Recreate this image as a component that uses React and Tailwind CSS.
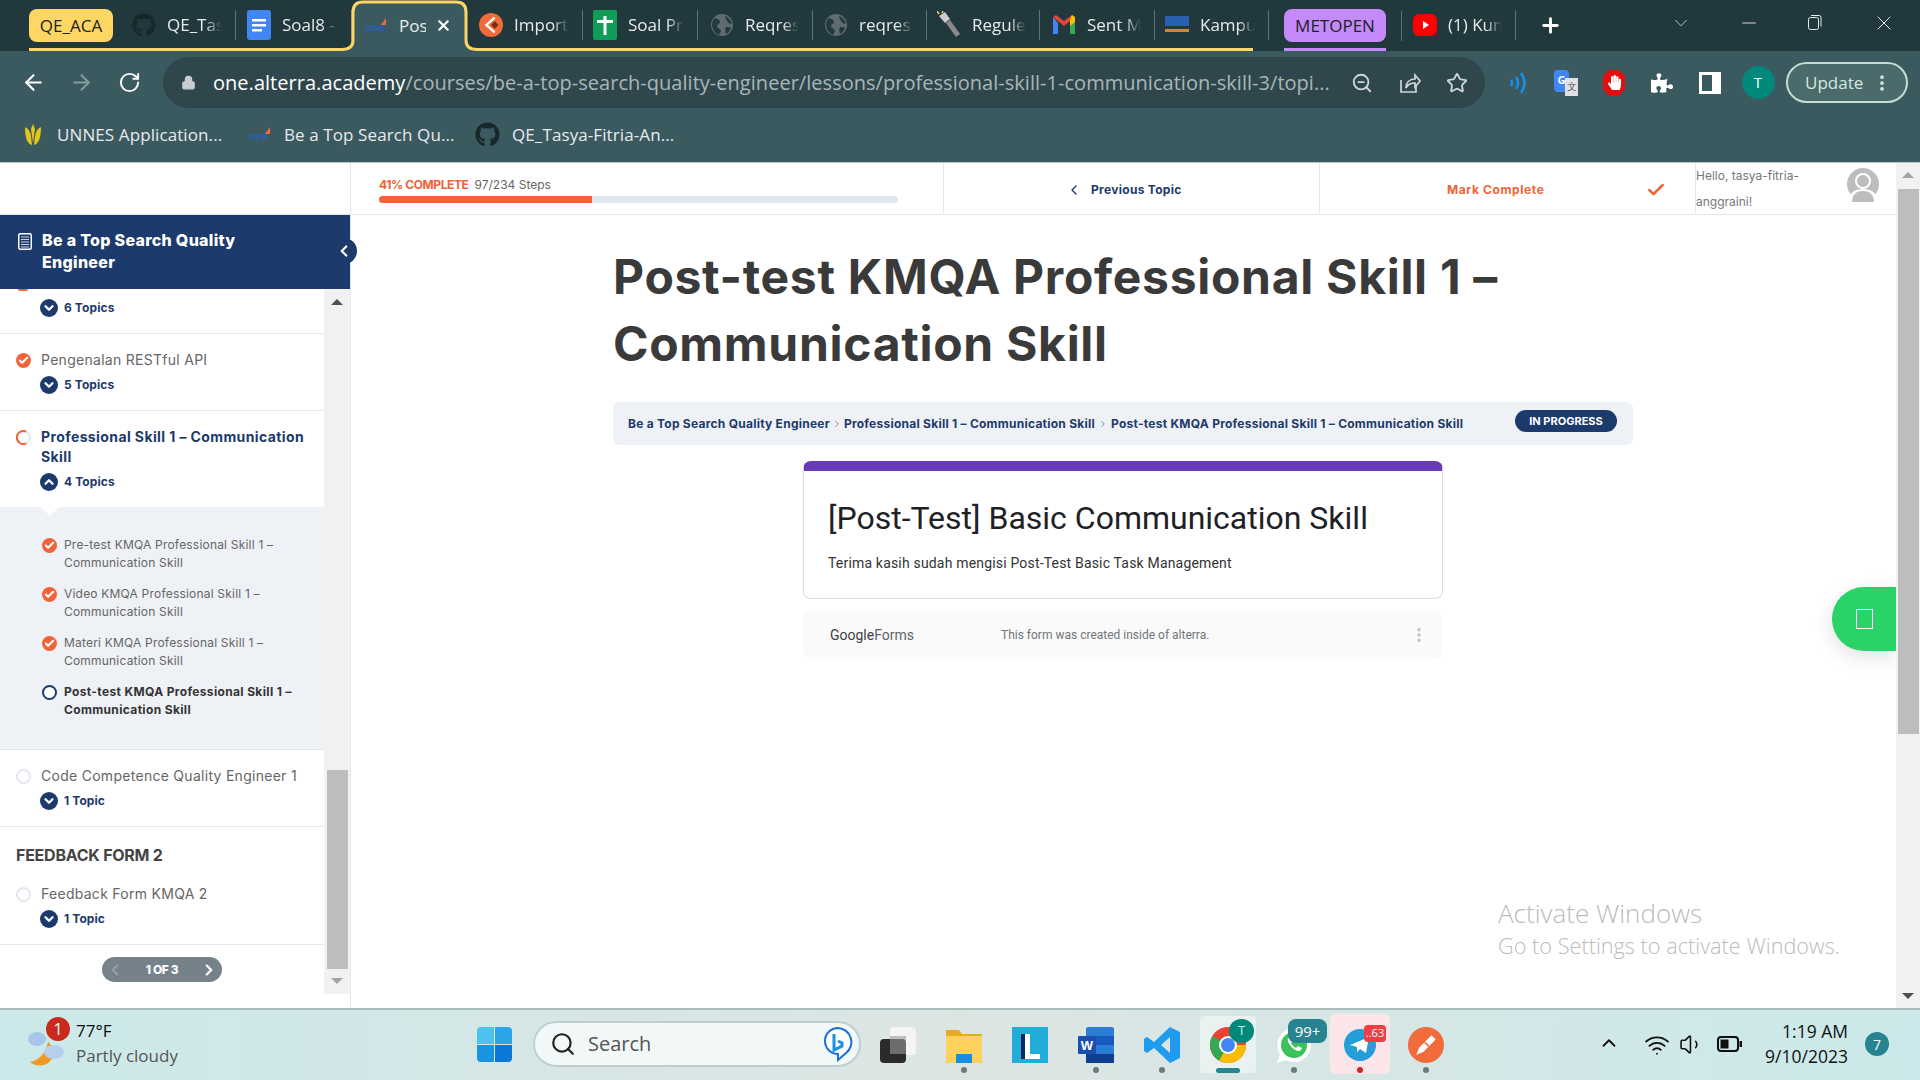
import React from "react";
import { ArrowLeft, ArrowRight, RotateCw, Lock, ZoomOut, Search, Star, Plus, X, Minus, ChevronDown, ChevronUp, ChevronLeft, ChevronRight, Check, Volume1, Wifi, MoreVertical } from "lucide-react";
import { FaGithub, FaPuzzlePiece, FaHandPaper } from "react-icons/fa";

const Globe = () => (
  <svg width="24" height="24" viewBox="0 0 24 24"><circle cx="12" cy="12" r="11" fill="#5f6b6e" /><path d="M5 5c3 1 5 2 5 4s-3 2-3 4 3 2 4 5l-2 4c-4-2-7-6-7-10 0-3 1-5 3-7zM15 3c3 1 6 4 7 8-2 0-4-1-5-3s-2-3-2-5zM16 14c2 0 4 0 5 1-1 3-3 5-5 6-1-2-1-5 0-7z" fill="#223a3e" /></svg>
);
const Docs = () => (
  <svg width="24" height="30" viewBox="0 0 24 30"><rect width="24" height="30" rx="3" fill="#4285f4" /><rect x="5" y="9" width="14" height="2.5" fill="#fff" /><rect x="5" y="14" width="14" height="2.5" fill="#fff" /><rect x="5" y="19" width="10" height="2.5" fill="#fff" /></svg>
);
const Sheets = () => (
  <svg width="24" height="30" viewBox="0 0 24 30"><rect width="24" height="30" rx="2" fill="#0f9d58" /><rect x="4" y="10" width="16" height="3" fill="#fff" /><rect x="10.5" y="6" width="3" height="19" fill="#fff" /></svg>
);
const Katalon = () => (
  <svg width="26" height="26" viewBox="0 0 26 26"><circle cx="13" cy="13" r="13" fill="#f26b3a" /><path d="M17 5l-9 8 9 8" fill="none" stroke="#fff" strokeWidth="2.5" /><path d="M17 9l4 4-4 4-4-4z" fill="#7a2c10" /></svg>
);
const Postman = ({ s = 26 }) => (
  <svg width={s} height={s} viewBox="0 0 26 26"><circle cx="13" cy="13" r="13" fill="#f26b3a" /><path d="M6 20l2-5 9-9 3 3-9 9z" fill="#fff" /><path d="M12 11l3 3" stroke="#f26b3a" strokeWidth="1.2" fill="none" /></svg>
);
const Flashlight = () => (
  <svg width="24" height="28" viewBox="0 0 24 28"><path d="M2 5l6-4 5 7-5 4z" fill="#ccc" /><path d="M9 12l4-3 10 14-4 3z" fill="#8a8a8a" /><path d="M0 0l2 3M6 0l-1 2" stroke="#fdd663" strokeWidth="1.5" /></svg>
);
const Gmail = () => (
  <svg width="24" height="22" viewBox="0 0 24 22"><path d="M1 3v17h5V9z" fill="#4285f4" /><path d="M23 3v17h-5V9z" fill="#34a853" /><path d="M1 3l11 9 11-9-3-2-8 6-8-6z" fill="#ea4335" /><path d="M20 1l3 2v5l-5 4V5z" fill="#fbbc04" /></svg>
);
const Kampus = () => (
  <svg width="24" height="20" viewBox="0 0 24 20"><rect x="0" y="1" width="24" height="10" fill="#2a5fb0" /><rect x="0" y="11" width="24" height="3" fill="#223a3e" /><rect x="0" y="14" width="24" height="3" fill="#d18b2f" /></svg>
);
const Youtube = () => (
  <svg width="24" height="22" viewBox="0 0 24 22"><rect width="24" height="22" rx="6" fill="#f00" /><path d="M10 7l6 4-6 4z" fill="#fff" /></svg>
);
const One = ({ c = "#2a5fb0" }) => (
  <span className="relative inline-flex w-[22px] h-[20px] items-center justify-center text-[11px] font-bold leading-none [font-family:'Inter',sans-serif]" style={{ color: c }}>one<span className="absolute right-0 top-0 w-0 h-0 border-l-[5px] border-l-transparent border-b-[7px] border-b-[#f26b3a]" /></span>
);

function Tab({ w, pl, icon, label }) {
  return (
    <div className="flex items-center h-[50px] shrink-0" style={{ width: w, paddingLeft: pl }}>
      <span className="w-[24px] flex justify-center shrink-0">{icon}</span>
      <span className="ml-[11px] flex-1 mr-[13px] overflow-hidden whitespace-nowrap text-[#e8eaed] text-[17px] [mask-image:linear-gradient(to_right,#000_70%,transparent)]">{label}</span>
      <span className="w-px h-[30px] bg-[#5d7376] shrink-0" />
    </div>
  );
}

function TabStrip() {
  return (
    <div className="relative h-[51px] bg-[#21383c] flex pl-[29px] shrink-0 [font-family:'Open_Sans',sans-serif]">
      <div className="w-[84px] h-[33px] mt-[9px] rounded-lg bg-[#fdd663] text-[#202124] text-[17px] flex items-center justify-center shrink-0">QE_ACA</div>
      <div className="w-[7px] shrink-0" />
      <Tab w={116} pl={12} icon={<FaGithub size={24} color="#17272a" />} label="QE_Tasya" />
      <Tab w={116} pl={11} icon={<Docs />} label="Soal8 -" />
      <div className="relative w-[116px] h-[51px] flex items-center pl-[12px] shrink-0">
        <svg className="absolute -left-[10px] top-0" width="135" height="51" viewBox="0 0 135 51"><path d="M0 49.5Q11 49.5 11 40V12Q11 2 21 2H114Q124 2 124 12V40Q124 49.5 135 49.5V51H0Z" fill="#3a5a60" /><path d="M0 49.5Q11 49.5 11 40V12Q11 2 21 2H114Q124 2 124 12V40Q124 49.5 135 49.5" fill="none" stroke="#fdd663" strokeWidth="3" /></svg>
        <span className="relative w-[24px]"><One /></span>
        <span className="relative ml-[11px] w-[27px] overflow-hidden text-[#e8eaed] text-[17px] whitespace-nowrap">Post</span>
        <X className="relative ml-[9px]" size={17} color="#fff" strokeWidth={3} />
      </div>
      <Tab w={115} pl={11} icon={<Katalon />} label="Importing" />
      <Tab w={115} pl={10} icon={<Sheets />} label="Soal Praktikum" />
      <Tab w={115} pl={12} icon={<Globe />} label="Reqres" />
      <Tab w={114} pl={11} icon={<Globe />} label="reqres.in" />
      <Tab w={113} pl={10} icon={<Flashlight />} label="Regulex" />
      <Tab w={115} pl={12} icon={<Gmail />} label="Sent Mail" />
      <Tab w={114} pl={10} icon={<Kampus />} label="Kampus" />
      <div className="ml-[15px] w-[102px] h-[33px] mt-[9px] rounded-lg bg-[#c58af9] text-[#202124] text-[17px] flex items-center justify-center shrink-0">METOPEN</div>
      <div className="ml-[15px] w-px h-[30px] mt-[11px] bg-[#5d7376] shrink-0" />
      <Tab w={114} pl={11} icon={<Youtube />} label="(1) Kuncup" />
      <Plus className="ml-[23px] mt-[14px] shrink-0" size={23} color="#fff" strokeWidth={3} />
      <ChevronDown className="ml-[108px] mt-[12px] shrink-0" size={22} color="#c7d0d2" strokeWidth={1} />
      <Minus className="ml-[46px] mt-[12px] shrink-0" size={22} color="#e8eaed" strokeWidth={1} />
      <svg className="ml-[47px] mt-[14px] shrink-0" width="16" height="17" viewBox="0 0 16 17" fill="none" stroke="#e8eaed"><rect x="1.5" y="3.5" width="10" height="12" rx="2" /><path d="M4 1.5h8a2 2 0 0 1 2 2v9" /></svg>
      <X className="ml-[49px] mt-[11px] shrink-0" size={24} color="#e8eaed" strokeWidth={1} />
      <div className="absolute left-[29px] bottom-0 w-[313px] h-[3px] bg-[#fdd663]" />
      <div className="absolute left-[477px] bottom-0 w-[776px] h-[3px] bg-[#fdd663]" />
      <div className="absolute left-[1284px] bottom-0 w-[102px] h-[3px] bg-[#c58af9]" />
    </div>
  );
}

function Ext({ children }) {
  return <span className="w-[48px] flex justify-center items-center shrink-0">{children}</span>;
}

function Toolbar() {
  return (
    <div className="h-[57px] pt-[6px] bg-[#3a5a60] flex items-center shrink-0 [font-family:'Open_Sans',sans-serif]">
      <ArrowLeft className="ml-[21px]" size={25} color="#fff" strokeWidth={2} />
      <ArrowRight className="ml-[23px]" size={25} color="#86999c" strokeWidth={2} />
      <RotateCw className="ml-[24px]" size={23} color="#fff" strokeWidth={2} />
      <div className="ml-[22px] w-[1322px] h-[51px] rounded-full bg-[#2f474c] flex items-center pl-[18px] shrink-0">
        <Lock size={15} color="#c8cfd1" fill="#c8cfd1" />
        <div className="ml-[17px] w-[1120px] text-[20px] tracking-[0.03px] whitespace-nowrap overflow-hidden text-[#a9b6b8]"><span className="text-white">one.alterra.academy</span>/courses/be-a-top-search-quality-engineer/lessons/professional-skill-1-communication-skill-3/topi...</div>
        <ZoomOut className="ml-[18px]" size={22} color="#cfd6d7" strokeWidth={2} />
        <svg className="ml-[26px]" width="22" height="22" viewBox="0 0 22 22" fill="none" stroke="#cfd6d7" strokeWidth="1.7"><path d="M2 8v12h15v-6" /><path d="M7 16c0-6 4-9 9-9V3l5 6-5 6v-4c-4 0-7 1-9 5z" /></svg>
        <Star className="ml-[25px]" size={22} color="#cfd6d7" strokeWidth={2} />
      </div>
      <span className="w-[9px] shrink-0" />
      <Ext><svg width="20" height="24" viewBox="0 0 20 24" fill="none" stroke="#1a8fe8" strokeWidth="2.5"><path d="M3 9q2 3 0 6M8 6q4 6 0 12M13 2q7 10 0 20" /></svg></Ext>
      <Ext><div className="relative w-[24px] h-[26px]"><span className="absolute left-0 top-0 w-[15px] h-[22px] bg-[#4285f4] rounded-sm text-white text-[11px] font-bold flex items-center justify-center">G</span><span className="absolute right-0 bottom-0 w-[13px] h-[18px] bg-[#dfe3e5] text-[#555] text-[10px] flex items-center justify-center">文</span></div></Ext>
      <Ext><div className="relative w-[24px] h-[28px]"><svg width="24" height="28" viewBox="0 0 24 28"><path d="M7 1h10l6 6v13l-6 7H7l-6-7V7z" fill="#e40e0e" /></svg><FaHandPaper className="absolute left-[5px] top-[6px]" size={15} color="#fff" /></div></Ext>
      <Ext><FaPuzzlePiece size={22} color="#fff" /></Ext>
      <Ext><div className="w-[22px] h-[22px] border-[3px] border-white border-r-[9px]" /></Ext>
      <Ext><div className="w-[33px] h-[33px] rounded-full bg-[#00897b] text-white flex items-center justify-center text-[15px]">T</div></Ext>
      <div className="ml-[4px] w-[122px] h-[41px] rounded-full border-2 border-[#c5dcd2] bg-[#4a6a6c] flex items-center text-[#d5e8de] text-[17px] pl-[17px] shrink-0">Update<MoreVertical className="ml-[9px]" size={20} color="#d5e8de" strokeWidth={2.5} /></div>
    </div>
  );
}

function Bookmarks() {
  const T = ({ children, w }) => <span className="ml-[12px] text-[#e8eaed] text-[17px] tracking-[0.1px] whitespace-nowrap" style={{ width: w }}>{children}</span>;
  return (
    <div className="h-[54px] bg-[#3a5a60] flex items-center pl-[21px] pb-[1px] shrink-0 [font-family:'Open_Sans',sans-serif]">
      <svg width="24" height="24" viewBox="0 0 24 24" fill="#e3c51c"><path d="M12 1l2 5-2 14-2-14zM4 4c3 1 5 4 6 9l1 9c-4-1-7-6-7-18zM20 4c-3 1-5 4-6 9l-1 9c4-1 7-6 7-18z" /></svg>
      <T w={191}>UNNES Application...</T>
      <span className="w-[24px]"><One /></span>
      <T w={191}>Be a Top Search Qu...</T>
      <FaGithub size={25} color="#17272a" />
      <T>QE_Tasya-Fitria-An...</T>
    </div>
  );
}

const Done = ({ s = 15 }) => (
  <span className="rounded-full bg-[#f26337] flex items-center justify-center shrink-0" style={{ width: s, height: s }}><Check size={s - 4} color="#fff" strokeWidth={4.5} /></span>
);
const Empty = () => <span className="w-[15px] h-[15px] rounded-full border-2 border-[#e2e7ed] shrink-0" />;
const Partial = () => (
  <svg className="shrink-0" width="15" height="15" viewBox="0 0 15 15" fill="none" strokeWidth="2"><circle cx="7.5" cy="7.5" r="6.5" stroke="#e2e7ed" /><path d="M10 1.600A6.500 6.500 0 1 0 10 13.400" stroke="#f26337" /></svg>
);
function Topics({ n, open }) {
  return (
    <div className="mt-[6px] -ml-px flex items-center h-[18px]">
      <span className="w-[18px] h-[18px] rounded-full bg-[#1c3a6b] flex items-center justify-center">
        {open ? <ChevronUp size={14} color="#fff" strokeWidth={4} /> : <ChevronDown size={14} color="#fff" strokeWidth={4} />}
      </span>
      <span className="ml-[6px] text-[12px] font-bold tracking-[0.1px] text-[#1c3a6b]">{n}</span>
    </div>
  );
}
function Row({ icon, title, n, open }) {
  return (
    <div className="flex pl-[16px] pr-[8px] pt-[16px] pb-[16px] border-b border-[#e2e7ed] bg-white">
      <span className="h-[20px] flex items-center">{icon}</span>
      <div className="ml-[10px]">
        <div className="text-[14px] leading-[20px] tracking-[0.28px] text-[#666] whitespace-nowrap">{title}</div>
        <Topics n={n} open={open} />
      </div>
    </div>
  );
}
function Sub({ icon, children, cur }) {
  return (
    <div className="flex pl-[42px] pr-[16px]">
      <span className="h-[18px] flex items-center w-[22px] shrink-0">{icon}</span>
      <div className={cur ? "text-[12px] leading-[18px] font-bold tracking-[0.35px] text-[#333]" : "text-[12px] leading-[18px] tracking-[0.2px] text-[#666]"}>{children}</div>
    </div>
  );
}

function Sidebar() {
  return (
    <aside className="w-[351px] shrink-0 border-r border-[#e2e7ed] flex flex-col [font-family:'Inter',sans-serif]">
      <div className="h-[52px] border-b border-[#e2e7ed] shrink-0" />
      <div className="relative h-[74px] w-[350px] bg-[#1c3a6b] shrink-0 flex pl-[18px] pt-[14px] z-10">
        <svg className="mt-[4px] shrink-0" width="14" height="17" viewBox="0 0 14 17"><rect x=".75" y=".75" width="12.5" height="15.5" rx="1.5" fill="none" stroke="#fff" strokeWidth="1.5" /><path d="M3 4h8M3 6.500h8M3 9h8M3 11.500h8M3 14h8" stroke="#c9d2e0" strokeWidth="1.2" /></svg>
        <div className="ml-[10px] w-[240px] text-white text-[16px] leading-[22px] font-extrabold tracking-[0.3px]">Be a Top Search Quality Engineer</div>
        <span className="absolute -right-[7px] top-[23px] w-[26px] h-[26px] rounded-full bg-[#1c3a6b] flex items-center justify-center"><ChevronLeft size={18} color="#fff" strokeWidth={3} /></span>
      </div>
      <div className="flex h-[705px] shrink-0">
        <div className="w-[324px] flex flex-col shrink-0">
          <div className="h-[45px] border-b border-[#e2e7ed] pl-[40px] pt-[10px] relative shrink-0">
            <div className="absolute left-[18px] top-0 w-[10px] h-[2px] rounded-b-full bg-[#f26337]" />
            <div className="flex items-center h-[18px]">
              <span className="w-[18px] h-[18px] rounded-full bg-[#1c3a6b] flex items-center justify-center"><ChevronDown size={14} color="#fff" strokeWidth={4} /></span>
              <span className="ml-[6px] text-[12px] font-bold tracking-[0.1px] text-[#1c3a6b]">6 Topics</span>
            </div>
          </div>
          <Row icon={<Done />} title="Pengenalan RESTful API" n="5 Topics" />
          <div className="flex pl-[16px] pr-[8px] pt-[16px] pb-[16px] bg-white">
            <span className="h-[20px] flex items-center"><Partial /></span>
            <div className="ml-[10px]">
              <div className="text-[14px] leading-[20px] font-bold tracking-[0.4px] text-[#1c3a6b]">Professional Skill 1 – Communication Skill</div>
              <Topics n="4 Topics" open />
            </div>
          </div>
          <div className="relative bg-[#eef1f5] border-b border-[#e2e7ed] pt-[29px] pb-[30px] flex flex-col gap-[13px]">
            <span className="absolute left-[41px] top-0 w-0 h-0 border-l-[9px] border-r-[9px] border-t-[9px] border-l-transparent border-r-transparent border-t-white" />
            <Sub icon={<Done />}>Pre-test KMQA Professional Skill 1 – Communication Skill</Sub>
            <Sub icon={<Done />}>Video KMQA Professional Skill 1 – Communication Skill</Sub>
            <Sub icon={<Done />}>Materi KMQA Professional Skill 1 – Communication Skill</Sub>
            <Sub cur icon={<span className="w-[15px] h-[15px] rounded-full border-2 border-[#1c3a6b] bg-white" />}>Post-test KMQA Professional Skill 1 – Communication Skill</Sub>
          </div>
          <Row icon={<Empty />} title="Code Competence Quality Engineer 1" n="1 Topic" />
          <div className="pl-[16px] pt-[16px] h-[41px] text-[16px] leading-[24px] font-bold tracking-[-0.25px] text-[#444] shrink-0">FEEDBACK FORM 2</div>
          <Row icon={<Empty />} title="Feedback Form KMQA 2" n="1 Topic" />
          <div className="mt-[12px] mx-auto w-[120px] h-[25px] rounded-full bg-[#75828a] flex items-center justify-between px-[4px] text-white text-[12px] font-extrabold tracking-[-0.4px] shrink-0">
            <ChevronLeft size={18} color="#93a0a7" strokeWidth={3} />
            <span>1 OF 3</span>
            <ChevronRight size={18} color="#fff" strokeWidth={3} />
          </div>
        </div>
        <div className="w-[26px] bg-[#f1f1f1] flex flex-col items-center relative">
          <span className="mt-[10px] w-0 h-0 border-l-[6px] border-r-[6px] border-b-[6px] border-l-transparent border-r-transparent border-b-[#505050]" />
          <span className="mt-[465px] w-[21px] h-[199px] bg-[#bdbdbd]" />
          <span className="mt-[9px] w-0 h-0 border-l-[6px] border-r-[6px] border-t-[6px] border-l-transparent border-r-transparent border-t-[#a3a3a3]" />
        </div>
      </div>
    </aside>
  );
}

function TopBar() {
  return (
    <div className="h-[52px] flex border-b border-[#e2e7ed] shrink-0 [font-family:'Inter',sans-serif]">
      <div className="w-[593px] pl-[28px] pr-[45px] border-r border-[#e2e7ed] pt-[14px]">
        <div className="h-[16px] flex items-center text-[12px]"><span className="font-bold text-[#f26337] tracking-[-0.4px]">41% COMPLETE</span><span className="ml-[6px] text-[#666]">97/234 Steps</span></div>
        <div className="mt-[3px] h-[7px] w-[519px] rounded-full bg-[#e2e7ed] overflow-hidden"><div className="h-full bg-[#f26337]" style={{ width: "41%" }} /></div>
      </div>
      <div className="w-[376px] border-r border-[#e2e7ed] flex items-center pl-[122px] pt-[2px]">
        <ChevronLeft size={16} color="#1c3a6b" strokeWidth={2} />
        <span className="ml-[9px] text-[12px] font-bold tracking-[0.3px] text-[#1c3a6b]">Previous Topic</span>
      </div>
      <div className="w-[376px] border-r border-[#e2e7ed] flex items-center pl-[127px] pt-[2px]">
        <span className="text-[12px] font-bold tracking-[0.6px] text-[#f26337]">Mark Complete</span>
        <Check className="ml-[102px]" size={20} color="#f26337" strokeWidth={3} />
      </div>
      <div className="flex-1 flex">
        <div className="w-[120px] text-[12px] leading-[26px] text-[#777]">Hello, tasya-fitria-anggraini!</div>
        <svg className="ml-[31px] mt-[5px]" width="32" height="34" viewBox="0 0 32 34" fill="#bdbdbd"><circle cx="16" cy="16" r="16" /><circle cx="16" cy="13" r="8" fill="#fff" /><path d="M2 34c0-10 6-13 14-13s14 3 14 13z" fill="#fff" /><circle cx="16" cy="13" r="6" fill="#bdbdbd" /><path d="M5 34c0-8 5-11 11-11s11 3 11 11z" fill="#bdbdbd" /></svg>
      </div>
    </div>
  );
}

function Content() {
  return (
    <main className="flex-1 relative overflow-hidden">
      <div className="w-[1020px] ml-[262px] pt-[28px]">
        <h1 className="text-[48px] leading-[67px] font-bold text-[#3a3a3a] tracking-[0.7px] [font-family:'Inter',sans-serif]">Post-test KMQA Professional Skill 1 – Communication Skill</h1>
        <div className="mt-[25px] h-[43px] rounded-md bg-[#eef1f5] flex items-center pl-[15px] pr-[16px] text-[12px] font-bold text-[#1c3a6b] tracking-[0.25px] whitespace-nowrap [font-family:'Inter',sans-serif]">
          <span>Be a Top Search Quality Engineer</span><ChevronRight className="mx-[2px]" size={10} color="#777" />
          <span>Professional Skill 1 – Communication Skill</span><ChevronRight className="mx-[3px]" size={10} color="#777" />
          <span>Post-test KMQA Professional Skill 1 – Communication Skill</span>
          <span className="ml-auto -mt-[5px] w-[102px] h-[22px] rounded-full bg-[#1c3a6b] text-white text-[11px] tracking-normal font-bold flex items-center justify-center">IN PROGRESS</span>
        </div>
        <div className="mt-[16px] w-[640px] mx-auto [font-family:'Roboto',sans-serif]">
          <div className="h-[138px] rounded-lg border border-[#dadce0] border-t-[10px] border-t-[#673ab7] bg-white pl-[24px] pt-[27px]">
            <div className="text-[32px] leading-[40px] text-[#202124]">[Post-Test] Basic Communication Skill</div>
            <div className="mt-[15px] text-[14px] leading-[20px] tracking-[0.18px] text-[#333]">Terima kasih sudah mengisi Post-Test Basic Task Management</div>
          </div>
          <div className="mt-[12px] h-[48px] rounded-lg bg-[#fafafa] flex items-center pl-[27px]">
            <span className="w-[171px] text-[14px] text-[#5f6368] whitespace-nowrap"><span className="text-[#3c4043]">Google</span>Forms</span>
            <span className="text-[12px] text-[#70757a]">This form was created inside of alterra.</span>
            <MoreVertical className="ml-[201px]" size={18} color="#bdc1c6" strokeWidth={2.5} />
          </div>
        </div>
      </div>
      <div className="absolute right-0 top-[372px] w-[64px] h-[64px] rounded-l-full bg-[#29d367] shadow-[0_6px_20px_rgba(0,0,0,0.12)] flex items-center justify-center">
        <span className="w-[17px] h-[20px] border border-white" />
      </div>
      <div className="absolute left-[1147px] top-[680px] text-[#bbbbbb] font-light [font-family:'Open_Sans',sans-serif] whitespace-nowrap">
        <div className="text-[26px] leading-[36px]">Activate Windows</div>
        <div className="text-[21.7px] leading-[30px]">Go to Settings to activate Windows.</div>
      </div>
    </main>
  );
}

function PageScrollbar() {
  return (
    <div className="w-[24px] bg-[#f1f1f1] shrink-0 flex flex-col items-center relative">
      <span className="mt-[9px] w-0 h-0 border-l-[6px] border-r-[6px] border-b-[6px] border-l-transparent border-r-transparent border-b-[#a3a3a3]" />
      <span className="mt-[11px] w-[21px] h-[545px] bg-[#bdbdbd]" />
      <span className="mt-[259px] w-0 h-0 border-l-[6px] border-r-[6px] border-t-[6px] border-l-transparent border-r-transparent border-t-[#505050]" />
    </div>
  );
}

function Slot({ children, dot, bg }) {
  return (
    <div className="relative w-[66px] h-full flex items-center justify-center shrink-0">
      {bg}
      <span className="relative">{children}</span>
      {dot && <span className="absolute left-[30px] top-[57px] w-[6px] h-[6px] rounded-full" style={{ background: dot }} />}
    </div>
  );
}

function Taskbar() {
  return (
    <div className="h-[70px] flex bg-linear-to-r from-[#cbe9ea] via-[#dde5e3] to-[#cbe9ea] shrink-0 [font-family:'Open_Sans',sans-serif]">
      <div className="w-[477px] shrink-0 flex pl-[28px] relative">
        <svg className="mt-[14px]" width="38" height="44" viewBox="0 0 38 44"><path d="M20 18c-2 10-8 18-18 20 4 4 12 5 18 1 8-5 6-17 0-21z" fill="#f09a24" /><ellipse cx="9" cy="15" rx="9" ry="7" fill="#a9c6ea" /><ellipse cx="26" cy="28" rx="10" ry="7" fill="#b5cfee" /></svg>
        <span className="absolute left-[46px] top-[7px] w-[24px] h-[24px] rounded-full bg-[#c92a1d] text-white text-[16px] flex items-center justify-center">1</span>
        <div className="ml-[10px] pt-[8px]">
          <div className="text-[17px] leading-[26px] text-[#111]">77°F</div>
          <div className="text-[17px] leading-[24px] text-[#555]">Partly cloudy</div>
        </div>
      </div>
      <div className="w-[35px] h-[35px] mt-[17px] grid grid-cols-2 gap-[1px] shrink-0">
        <span className="bg-[#4cc2f1] rounded-tl-sm" /><span className="bg-[#2ba5e8] rounded-tr-sm" /><span className="bg-[#1a93e0] rounded-bl-sm" /><span className="bg-[#0a78d4] rounded-br-sm" />
      </div>
      <div className="ml-[21px] w-[328px] h-[46px] mt-[11px] rounded-full bg-[#f2f7f7] border-2 border-[#bfcfcf] flex items-center pl-[15px] shrink-0">
        <Search size={26} color="#222" strokeWidth={2} />
        <span className="ml-[12px] text-[20px] text-[#555] flex-1">Search</span>
        <svg className="mr-[6px]" width="30" height="36" viewBox="0 0 30 36" fill="none"><path d="M15 2a14 14 0 0 1 8 25l-8 7v-6a13 13 0 0 1 0-26z" fill="#fff" stroke="#1a6ed8" strokeWidth="2" /><path d="M11 8v16l8-4v-3l-4-2" stroke="#1a8fe8" strokeWidth="3" /></svg>
      </div>
      <div className="ml-[4px] flex h-full shrink-0">
        <Slot><div className="relative w-[36px] h-[36px]"><span className="absolute right-0 top-0 w-[26px] h-[28px] bg-[#f4f4f4] rounded-sm" /><span className="absolute left-0 bottom-0 w-[26px] h-[24px] bg-[#2b2b2b] rounded-sm" /><span className="absolute left-[10px] top-[9px] w-[16px] h-[18px] bg-[#999] opacity-60" /></div></Slot>
        <Slot dot="#6b7a7c"><svg width="36" height="36" viewBox="0 0 36 36"><path d="M0 3h13l3 4h20v29H0z" fill="#e9a825" /><rect y="9" width="36" height="27" fill="#fdd25c" /><path d="M10 36v-9h16v9z" fill="#1a8fe0" /></svg></Slot>
        <Slot><svg width="36" height="36" viewBox="0 0 36 36"><rect width="36" height="36" fill="#22acd8" /><path d="M9 7h9v20h10v5H9z" fill="#fff" /><path d="M9 7h4v25H9z" fill="#0c2a5e" /></svg></Slot>
        <Slot dot="#6b7a7c"><svg width="36" height="36" viewBox="0 0 36 36"><rect x="8" y="0" width="28" height="36" rx="2" fill="#2b7cd3" /><rect x="8" y="9" width="28" height="9" fill="#185abd" /><rect x="8" y="27" width="28" height="9" fill="#103f91" /><rect y="9" width="18" height="18" rx="1" fill="#1a4fb0" /><text x="9" y="23" fontSize="13" fontWeight="700" fill="#fff" textAnchor="middle" fontFamily="Liberation Sans, sans-serif">W</text></svg></Slot>
        <Slot dot="#6b7a7c"><svg width="36" height="36" viewBox="0 0 36 36"><path d="M26 0l10 5v26l-10 5-16-15-7 5-3-2v-12l3-2 7 5zM26 10l-9 8 9 8z" fill="#1f9cf0" /></svg></Slot>
        <Slot bg={<><span className="absolute left-[5px] top-[6px] w-[56px] h-[57px] rounded bg-[#e9f1f1]" /><span className="absolute left-[21px] top-[58px] w-[24px] h-[5px] rounded-full bg-[#26838f]" /></>}>
          <div className="relative w-[36px] h-[36px]">
            <svg width="36" height="36" viewBox="0 0 36 36"><circle cx="18" cy="18" r="18" fill="#ea4335" /><path d="M18 18h18a18 18 0 0 1-27 15.600z" fill="#fbbc04" /><path d="M18 18L9 33.600A18 18 0 0 1 2.400 9z" fill="#34a853" /><circle cx="18" cy="18" r="8" fill="#4285f4" stroke="#fff" strokeWidth="2" /></svg>
            <span className="absolute -top-[8px] left-[19px] w-[25px] h-[24px] rounded-full bg-[#00897b] text-[#cfe8e2] text-[13px] flex items-center justify-center">T</span>
          </div>
        </Slot>
        <Slot dot="#6b7a7c">
          <div className="relative w-[36px] h-[36px]">
            <svg width="36" height="36" viewBox="0 0 36 36"><path d="M18 1a17 17 0 0 1 0 34c-3 0-6-1-8-2l-9 3 3-9A17 17 0 0 1 18 1z" fill="#fff" /><circle cx="18" cy="18" r="13" fill="#3bc25a" /><path d="M12 11c-2 4 6 14 12 13l2-3-4-2-2 2c-2-1-4-3-5-5l2-2-2-4z" fill="#fff" /></svg>
            <span className="absolute -top-[8px] left-[12px] w-[39px] h-[24px] rounded-lg bg-[#26838f] text-white text-[15px] flex items-center justify-center">99+</span>
          </div>
        </Slot>
        <Slot dot="#c92a1d" bg={<span className="absolute left-[3px] top-[4px] w-[60px] h-[60px] rounded-md bg-[#fbe5e8]" />}>
          <div className="relative w-[32px] h-[36px]">
            <svg width="32" height="36" viewBox="0 0 32 36"><circle cx="16" cy="18" r="16" fill="#229ed9" /><path d="M6 18l19-8-3 16-6-4-3 3v-5z" fill="#fff" /></svg>
            <span className="absolute -top-[2px] left-[20px] w-[22px] h-[17px] rounded bg-[#ee3f44] text-white text-[11px] flex items-center justify-center">..63</span>
          </div>
        </Slot>
        <Slot dot="#6b7a7c"><Postman s={36} /></Slot>
      </div>
      <div className="flex items-start flex-1">
        <ChevronUp className="ml-[139px] mt-[22px]" size={22} color="#111" strokeWidth={2} />
        <Wifi className="ml-[24px] mt-[22px]" size={26} color="#111" strokeWidth={1.7} />
        <Volume1 className="ml-[9px] mt-[22px]" size={25} color="#111" strokeWidth={1.5} />
        <svg className="ml-[13px] mt-[24px]" width="26" height="20" viewBox="0 0 26 20" fill="none"><rect x="1" y="3" width="20" height="14" rx="3" stroke="#111" strokeWidth="2" /><rect x="3.500" y="5.500" width="8" height="9" fill="#111" /><rect x="22.500" y="7" width="2.500" height="6" fill="#111" /></svg>
        <div className="ml-[6px] w-[99px] text-right text-[17.500px] leading-[25px] pt-[9px] text-[#111] whitespace-nowrap"><div>1:19 AM</div><div>9/10/2023</div></div>
        <span className="ml-[17px] mt-[22px] w-[24px] h-[24px] rounded-full bg-[#26838f] text-white text-[14px] flex items-center justify-center">7</span>
      </div>
    </div>
  );
}

export default function App() {
  return (
    <div className="w-[1920px] h-[1080px] overflow-hidden flex flex-col bg-white">
      <TabStrip />
      <Toolbar />
      <Bookmarks />
      <div className="h-px bg-[#b9c6c8] shrink-0" />
      <div className="h-[845px] flex shrink-0">
        <Sidebar />
        <div className="flex-1 flex flex-col">
          <TopBar />
          <Content />
        </div>
        <PageScrollbar />
      </div>
      <div className="h-[2px] bg-[#a8bcbc] shrink-0" />
      <Taskbar />
    </div>
  );
}
